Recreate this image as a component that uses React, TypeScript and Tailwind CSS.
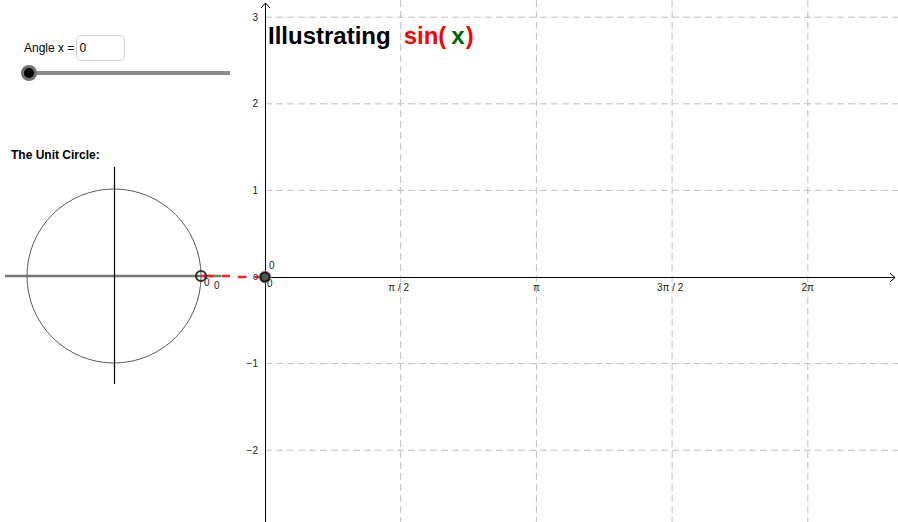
import React from "react";

const U = 86.6;
const OX = 265;
const OY = 277;
const X_STEP = 135.7;

const yTicks = [3, 2, 1, -1, -2];
const xTicks = [
  { k: 1, label: "π / 2", dx: -2 },
  { k: 2, label: "π", dx: 0 },
  { k: 3, label: "3π / 2", dx: -2 },
  { k: 4, label: "2π", dx: 0 },
];

const labelFont = { fontFamily: "'Liberation Sans', Arial, sans-serif" };

// red dashed segment from the circle point to the y-axis, shared by both svgs
const Projection = () => (
  <line
    x1={205}
    y1={OY}
    x2={262}
    y2={OY}
    stroke="#ff2020"
    strokeWidth={2.5}
    strokeDasharray="8.5 8"
  />
);

const UnitCircle = () => (
  <svg width={235} height={238} className="block">
    <g transform="translate(0,-162)" style={labelFont}>
      <line x1={5} y1={OY} x2={221} y2={OY} stroke="#777" strokeWidth={2.5} />
      <circle cx={114} cy={OY} r={87} fill="none" stroke="#5c5c5c" strokeWidth={1} />
      <line x1={114.5} y1={168} x2={114.5} y2={385} stroke="#000" strokeWidth={1.2} />
      <line x1={201} y1={OY} x2={206} y2={OY} stroke="#ff2020" strokeWidth={2.5} />
      <Projection />
      <circle cx={201} cy={OY} r={5} fill="none" stroke="#333" strokeWidth={2.2} />
      <text x={204} y={287} fontSize={10} fill="#222">0</text>
      <text x={214} y={290} fontSize={10} fill="#222">0</text>
    </g>
  </svg>
);

const Graph = () => (
  <svg width={663} height={522} className="block">
    <g transform="translate(-235,0)" style={labelFont}>
      {yTicks.map((k) => (
        <line
          key={"h" + k}
          x1={OX}
          y1={OY - k * U}
          x2={898}
          y2={OY - k * U}
          stroke="#c0c0c0"
          strokeDasharray="7 4"
        />
      ))}
      {xTicks.map((t) => (
        <line
          key={"v" + t.k}
          x1={OX + t.k * X_STEP}
          y1={0}
          x2={OX + t.k * X_STEP}
          y2={522}
          stroke="#c0c0c0"
          strokeDasharray="7 4"
        />
      ))}

      {/* axes */}
      <line x1={265.5} y1={3} x2={265.5} y2={522} stroke="#000" />
      <polyline points="261,8 265.5,3 270,8" fill="none" stroke="#000" />
      <line x1={262} y1={277.5} x2={895} y2={277.5} stroke="#000" />
      <polyline points="890,273 895,277.5 890,282" fill="none" stroke="#000" />

      {yTicks.map((k) => (
        <text
          key={"yl" + k}
          x={258}
          y={OY - k * U + 3.5}
          fontSize={10}
          textAnchor="end"
          fill="#222"
        >
          {k < 0 ? "−" + Math.abs(k) : k}
        </text>
      ))}
      {xTicks.map((t) => (
        <text
          key={"xl" + t.k}
          x={OX + t.k * X_STEP + t.dx}
          y={291}
          fontSize={10}
          textAnchor="middle"
          fill="#222"
        >
          {t.label}
        </text>
      ))}

      <Projection />
      <text x={253} y={280} fontSize={9} fill="#222">0</text>
      <text x={267} y={287} fontSize={10} fill="#222">0</text>
      <text x={269} y={269} fontSize={10} fill="#222">0</text>
      <circle cx={265} cy={OY} r={6} fill="none" stroke="#999" strokeWidth={1} />
      <circle cx={265} cy={OY} r={4.5} fill="#555" stroke="#1a1a1a" strokeWidth={2} />
    </g>
  </svg>
);

export default function App() {
  return (
    <div
      className="flex w-[898px] h-[522px] bg-white overflow-hidden"
      style={labelFont}
    >
      <div className="flex flex-col w-[235px] shrink-0">
        <div className="flex items-center mt-[35px] pl-[24px] h-[26px] text-[12px] text-black">
          <span>Angle x =</span>
          <div className="ml-[2px] w-[49px] h-[26px] rounded-[5px] border border-[#d4d4d4] flex items-center pl-[2px]">
            0
          </div>
        </div>
        <div className="relative mt-[4px] ml-[20px] w-[210px] h-[16px] flex items-center">
          <div className="ml-[8px] flex-1 h-[4px] bg-[#8c8c8c]" />
          <div className="absolute left-[1px] top-0 w-[16px] h-[16px] rounded-full bg-black border-[3px] border-[#707070]" />
        </div>
        <div className="mt-[67px] pl-[11px] text-[12px] leading-[14px] font-bold text-black">
          The Unit Circle:
        </div>
        <div className="mt-[-1px]">
          <UnitCircle />
        </div>
      </div>
      <div className="relative flex-1">
        <Graph />
        <div className="absolute left-[33px] top-[24px] flex items-baseline text-[24px] leading-[24px] font-bold whitespace-pre">
          <span className="text-black">Illustrating</span>
          <span className="ml-[13px] text-[#ff0000]">sin(</span>
          <span className="ml-[5px] text-[#006400]">x</span>
          <span className="ml-[1px] text-[#ff0000]">)</span>
        </div>
      </div>
    </div>
  );
}
